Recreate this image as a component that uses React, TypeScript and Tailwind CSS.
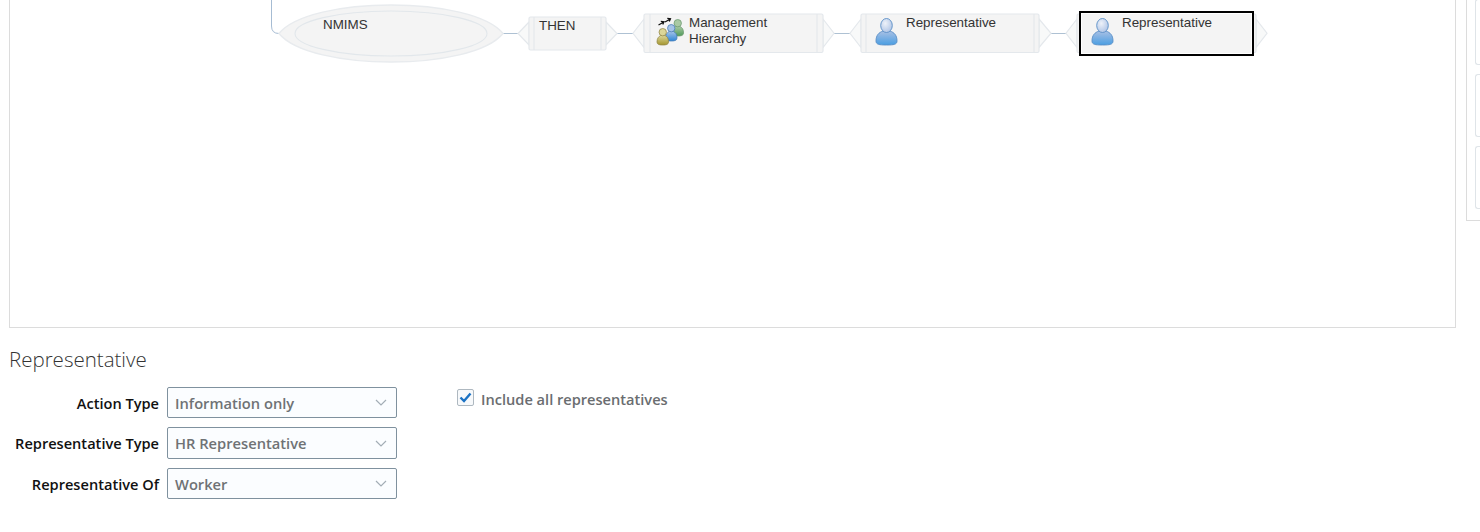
import React from "react";

function Person({ x, y, id, body, head, edge }: { x: number; y: number; id: string; body: string; head: string; edge: string }) {
  return (
    <g transform={`translate(${x} ${y})`}>
      <defs>
        <linearGradient id={`${id}b`} x1="0" y1="0" x2="0" y2="1">
          <stop offset="0" stopColor={head} />
          <stop offset="1" stopColor={body} />
        </linearGradient>
        <radialGradient id={`${id}h`} cx="0.4" cy="0.35" r="0.75">
          <stop offset="0" stopColor="#eef2f9" />
          <stop offset="1" stopColor={head} />
        </radialGradient>
      </defs>
      <path d="M0 23 C0 17 3 14.5 7 13 L14 13 C18 14.5 21 17 21 23 C21 26.5 18 27 10.5 27 C3 27 0 26.5 0 23 Z" fill={`url(#${id}b)`} stroke={edge} strokeWidth="0.9" />
      <ellipse cx="10.5" cy="7.5" rx="5.8" ry="7" fill={`url(#${id}h)`} stroke={edge} strokeWidth="0.9" />
    </g>
  );
}

function MiniPerson({ x, y, id, body, head, edge }: { x: number; y: number; id: string; body: string; head: string; edge: string }) {
  return (
    <g transform={`translate(${x} ${y})`}>
      <defs>
        <linearGradient id={`${id}m`} x1="0" y1="0" x2="0" y2="1">
          <stop offset="0" stopColor={head} />
          <stop offset="1" stopColor={body} />
        </linearGradient>
      </defs>
      <path d="M0 14 C0 10 2 8.5 3.5 7.5 L8 7.5 C10 8.5 11.5 10 11.5 14 C11.5 16.6 9 17 5.75 17 C2.5 17 0 16.6 0 14 Z" fill={`url(#${id}m)`} stroke={edge} strokeWidth="0.8" />
      <circle cx="5.75" cy="4.2" r="3.7" fill={head} stroke={edge} strokeWidth="0.8" />
    </g>
  );
}

function Node({ l, r, t, b, il, ir, tipL, tipR }: { l: number; r: number; t: number; b: number; il: number; ir: number; tipL: number; tipR: number }) {
  const m = (t + b) / 2;
  return (
    <g>
      <path d={`M${l} ${t + 5} L${tipL} ${m} L${l} ${b - 5} Z M${r} ${t + 5} L${tipR} ${m} L${r} ${b - 5} Z`} fill="#f8f9f9" stroke="#e4e8ec" strokeWidth="1.2" />
      <rect x={l} y={t} width={r - l} height={b - t} rx="1.5" fill="#f4f4f4" stroke="#e4e8ec" strokeWidth="1.2" />
      <path d={`M${il} ${t} V${b} M${ir} ${t} V${b}`} stroke="#e4e8ec" strokeWidth="1.2" />
    </g>
  );
}

function Diagram() {
  return (
    <svg className="absolute left-0 top-0 h-[327px] w-[1445px]" viewBox="10 0 1445 327" fill="none">
      <path d="M271.5 0 V26 Q271.5 33.5 279 33.5" stroke="#a6bcd3" strokeWidth="1" />
      <path d="M502 33.5 H518 M617 33.5 H633 M834 33.5 H850 M1051 33.5 H1067" stroke="#aec1d3" strokeWidth="1" />
      <path d="M279 33.5 C310 -4.5 472 -4.5 503 33.5 C472 71.5 310 71.5 279 33.5 Z" fill="#f4f4f4" stroke="#e8ebee" strokeWidth="1.4" />
      <ellipse cx="391" cy="33.5" rx="96" ry="22.5" fill="#f4f4f4" stroke="#e2e7eb" strokeWidth="1.1" />
      <Node l={529} r={606} t={17} b={50} il={534} ir={601} tipL={518} tipR={617} />
      <Node l={644} r={823} t={14} b={52.5} il={650} ir={817} tipL={633} tipR={834} />
      <Node l={861} r={1039} t={14} b={52.5} il={866} ir={1034} tipL={850} tipR={1051} />
      <Node l={1077} r={1256} t={14} b={52.5} il={1082} ir={1250} tipL={1066} tipR={1267} />
      <rect x="1080" y="12" width="173" height="43" fill="#f4f4f4" stroke="#000" strokeWidth="2" />
      <rect x="1081.5" y="13.5" width="170" height="40" fill="none" stroke="#fff" strokeWidth="1" />

      <MiniPerson x={672} y={19} id="g" body="#4f9a5a" head="#a9c9a4" edge="#6f9c72" />
      <MiniPerson x={665.5} y={24} id="c" body="#2f86d6" head="#a5c3e8" edge="#4a7fb8" />
      <MiniPerson x={657} y={28} id="o" body="#a4962f" head="#dcd698" edge="#94894a" />
      <path d="M658.5 25 L663 22.4 M660.8 21.4 L664 21.8 L662.8 24.4 M665 22 L669.5 19.4 M667.3 18.4 L670.5 18.8 L669.3 21.4" stroke="#111" strokeWidth="1.2" />
      <Person x={876} y={18} id="p1" body="#4a9ee2" head="#a9c0e4" edge="#5a8fc6" />
      <Person x={1092} y={18} id="p2" body="#4a9ee2" head="#a9c0e4" edge="#5a8fc6" />
    </svg>
  );
}

function Label({ className, children }: { className: string; children: React.ReactNode }) {
  return <div className={`absolute whitespace-nowrap font-['Liberation_Sans',Arial,sans-serif] text-[13.4px] leading-[16px] text-[#333] ${className}`}>{children}</div>;
}

function Field({ label, value, height }: { label: string; value: string; height: string }) {
  return (
    <div className={`flex items-center ${height}`}>
      <div className="w-[150px] whitespace-nowrap pt-[2px] text-right text-[14.6px] font-semibold text-[#111]">{label}</div>
      <div className="ml-[8px] flex h-full w-[230px] items-center justify-between rounded-[2px] border border-[#7f919e] bg-[#fbfdff] pl-[7px] pr-[9px] text-[14.7px] font-semibold text-[#6f7275]">
        <span className="pt-px">{value}</span>
        <svg width="12" height="7" viewBox="0 0 12 7" fill="none">
          <path d="M1 1 L6 6 L11 1" stroke="#a3adb5" strokeWidth="1.2" />
        </svg>
      </div>
    </div>
  );
}

export default function App() {
  return (
    <div className="h-[532px] w-[1480px] overflow-hidden bg-white font-['Open_Sans',sans-serif]">
      <div className="flex items-start">
        <div className="relative ml-[9px] h-[328px] w-[1447px] shrink-0 border-x border-b border-[#dcdcdc]">
          <Diagram />
          <Label className="left-[313px] top-[17px]">NMIMS</Label>
          <Label className="left-[529px] top-[18px]">THEN</Label>
          <Label className="left-[679px] top-[15px]">Management<br />Hierarchy</Label>
          <Label className="left-[896px] top-[15px]">Representative</Label>
          <Label className="left-[1112px] top-[15px]">Representative</Label>
        </div>
        <div className="ml-[10px] flex h-[221px] flex-1 flex-col justify-end gap-[9px] overflow-hidden border-b border-l border-[#dcdcdc] pb-[11px] pl-[8px]">
          <div className="h-[66px] shrink-0 rounded-l-[3px] border-y border-l border-[#dfe4e8]" />
          <div className="h-[63px] shrink-0 rounded-l-[3px] border-y border-l border-[#dfe4e8]" />
          <div className="h-[63px] shrink-0 rounded-l-[3px] border-y border-l border-[#dfe4e8]" />
        </div>
      </div>
      <div className="mt-[16px] pl-[9px]">
        <h2 className="text-[20.5px] font-light leading-[30px] text-[#333]">Representative</h2>
        <div className="mt-[13px] flex">
          <div className="flex flex-col gap-[9px]">
            <Field label="Action Type" value="Information only" height="h-[31px]" />
            <Field label="Representative Type" value="HR Representative" height="h-[32px]" />
            <Field label="Representative Of" value="Worker" height="h-[31px]" />
          </div>
          <label className="ml-[60px] mt-px flex h-[19px] items-center">
            <span className="flex h-[17px] w-[17px] items-center justify-center rounded-[2px] border border-[#aeb8c0] bg-[#f7f9fb]">
              <svg width="13" height="11" viewBox="0 0 13 11" fill="none">
                <path d="M1.5 5.5 L5 9 L11.5 1.5" stroke="#1b72c4" strokeWidth="2.4" />
              </svg>
            </span>
            <span className="ml-[7px] pt-[5px] text-[14.6px] font-semibold text-[#6a6d70]">Include all representatives</span>
          </label>
        </div>
      </div>
    </div>
  );
}
